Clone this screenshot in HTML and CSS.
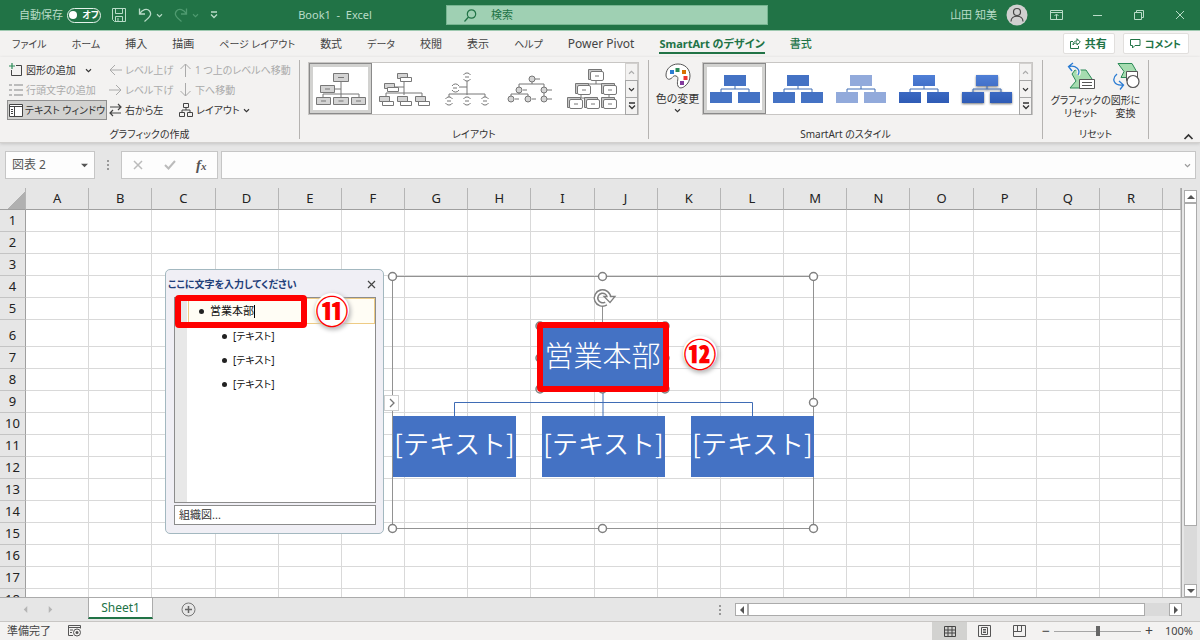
FILE: index.html
```
<!DOCTYPE html>
<html lang="ja">
<head>
    <meta charset="UTF-8">
    <meta name="viewport" content="width=device-width, initial-scale=1.0">
    <title>Book1 - Excel</title>
    <link rel="stylesheet" href="styles.css">
</head>
<body>
<!-- shared drawings -->
<svg class="defs" width="0" height="0" aria-hidden="true">
    <defs>
        <symbol id="caret" viewBox="0 0 8 6"><path d="M1 1.500l3 3 3-3" fill="none" stroke="currentColor" stroke-width="1.300"/></symbol>
        <symbol id="caretUp" viewBox="0 0 8 6"><path d="M1 4.500l3-3 3 3" fill="none" stroke="currentColor" stroke-width="1.300"/></symbol>
        <symbol id="more" viewBox="0 0 8 8"><path d="M1 1h6M1 3.500l3 3 3-3" fill="none" stroke="currentColor" stroke-width="1.300"/></symbol>
        <symbol id="tri" viewBox="0 0 8 8"><path d="M0 2h8L4 6z" fill="currentColor"/></symbol>
        <linearGradient id="blueFill" x1="0" y1="0" x2="0" y2="1">
            <stop offset="0" stop-color="#4f7fd6"/><stop offset="1" stop-color="#2f5bb5"/>
        </linearGradient>
        <symbol id="styleThumb" viewBox="0 0 54 34">
            <path d="M27 13v4M13 20v-3h28v3" fill="none" stroke="#3f6cb5" stroke-width="1"/>
            <path d="M16 3h22v11H16zM2 20h22v11H2zM30 20h22v11H30z"/>
        </symbol>
    </defs>
</svg>

<header class="titlebar">
    <div class="quick">
        <span class="autosave">自動保存</span>
        <button class="toggle" aria-label="自動保存"><i></i>オフ</button>
        <button class="ic-btn save" aria-label="保存"><svg width="14" height="14" viewBox="0 0 14 14"><path d="M.5.500h13v13H2.500l-2-2zM3.500.500v5h7v-5M3.500 13V8.500h7V13M6 10v3" fill="none" stroke="currentColor"/></svg></button>
        <button class="ic-btn undo" aria-label="元に戻す"><svg width="14" height="14" viewBox="0 0 14 14"><path d="M1.500.500v5.500H7M1.500 6C4 1.500 9 0 11.500 3s1 5.500-5 10.500" fill="none" stroke="currentColor" stroke-width="1.300"/></svg></button>
        <svg class="mini" width="7" height="5"><use href="#caret"/></svg>
        <button class="ic-btn redo" aria-label="やり直し"><svg width="14" height="14" viewBox="0 0 14 14"><path d="M12.500.500v5.500H7M12.500 6C10 1.500 5 0 2.500 3s-1 5.500 5 10.500" fill="none" stroke="currentColor" stroke-width="1.300"/></svg></button>
        <svg class="mini dim" width="7" height="5"><use href="#caret"/></svg>
        <button class="ic-btn custom" aria-label="カスタマイズ"><svg width="8" height="8"><use href="#more"/></svg></button>
    </div>
    <div class="doc">Book1&nbsp; -&nbsp; Excel</div>
    <label class="search">
        <svg width="13" height="13" viewBox="0 0 13 13"><circle cx="7.500" cy="5" r="4.200" fill="none" stroke="currentColor" stroke-width="1.200"/><path d="M4.500 8L.5 12.500" stroke="currentColor" stroke-width="1.200"/></svg>
        <input type="text" placeholder="検索" aria-label="検索">
    </label>
    <div class="account">
        <span>山田 知美</span>
        <svg class="avatar" width="22" height="22" viewBox="0 0 22 22"><circle cx="11" cy="11" r="10.500" fill="#d0d0d0"/><circle cx="11" cy="8" r="3.500" fill="none" stroke="#444" stroke-width="1.200"/><path d="M5 17.500c0-7 12-7 12 0" fill="none" stroke="#444" stroke-width="1.200"/></svg>
        <button class="win" aria-label="リボンの表示"><svg width="13" height="11" viewBox="0 0 13 11"><path d="M.5.500h12v9H.500zM.5 2.500h12M6.500 9V4.500M4.500 6l2-2 2 2" fill="none" stroke="currentColor"/></svg></button>
        <button class="win" aria-label="最小化"><svg width="9" height="9"><path d="M0 4.500h9" stroke="currentColor"/></svg></button>
        <button class="win" aria-label="元のサイズ"><svg width="10" height="10"><path d="M.5 2.500h7v7h-7zM2.500 2.500v-2h7v7h-2" fill="none" stroke="currentColor"/></svg></button>
        <button class="win" aria-label="閉じる"><svg width="10" height="10"><path d="M1 1l8 8M9 1l-8 8" stroke="currentColor"/></svg></button>
    </div>
</header>

<nav class="tabs">
    <a href="#" class="kana">ファイル</a>
    <a href="#" class="kana">ホーム</a>
    <a href="#">挿入</a>
    <a href="#">描画</a>
    <a href="#" class="kana">ページ レイアウト</a>
    <a href="#">数式</a>
    <a href="#" class="kana">データ</a>
    <a href="#">校閲</a>
    <a href="#">表示</a>
    <a href="#" class="kana">ヘルプ</a>
    <a href="#" class="latin">Power Pivot</a>
    <a href="#" class="active">SmartArt のデザイン</a>
    <a href="#" class="context">書式</a>
    <div class="share">
        <button><svg width="11" height="11" viewBox="0 0 11 11"><path d="M3 3.500H.500v7h8V8M3 7c0-3 2-4 4-4V.700L10.300 4 7 7V5C5 5 4 5.500 3 7z" fill="none" stroke="currentColor"/></svg>共有</button>
        <button class="kana"><svg width="11" height="11" viewBox="0 0 11 11"><path d="M.5 1.500h9.500v6H5l-2.500 2.500V7.500h-2z" fill="none" stroke="currentColor"/></svg>コメント</button>
    </div>
</nav>

<section class="ribbon">
    <div class="group create">
        <div class="commands">
            <button><svg width="14" height="14" viewBox="0 0 14 14"><path d="M7 2.500h5.500v10H2.500V7" fill="none" stroke="#444"/><path d="M3 0v6M0 3h6" stroke="#2b8a57" stroke-width="1.200"/></svg>図形の追加<svg class="drop" width="7" height="5"><use href="#caret"/></svg></button>
            <button disabled><svg width="13" height="12" viewBox="0 0 13 12"><path d="M13 6H1M6 1L1 6l5 5" fill="none" stroke="currentColor"/></svg>レベル上げ</button>
            <button disabled><svg width="13" height="14" viewBox="0 0 13 14"><path d="M6.500 14V1M1.500 6l5-5 5 5" fill="none" stroke="currentColor"/></svg>1 つ上のレベルへ移動</button>
            <button disabled><svg width="14" height="14" viewBox="0 0 14 14"><path d="M0 2h3M0 7h3M0 12h3M5 2h9M5 7h9M5 12h9" stroke="currentColor" stroke-width="1.400"/></svg>行頭文字の追加</button>
            <button disabled><svg width="13" height="12" viewBox="0 0 13 12"><path d="M0 6h12M7 1l5 5-5 5" fill="none" stroke="currentColor"/></svg>レベル下げ</button>
            <button disabled><svg width="13" height="14" viewBox="0 0 13 14"><path d="M6.500 0v13M1.500 8l5 5 5-5" fill="none" stroke="currentColor"/></svg>下へ移動</button>
            <button class="pressed"><svg width="14" height="13" viewBox="0 0 14 13"><path d="M.5.500h13v12H.500zM.5 2.500h13M5.500 2.500v10" fill="#fff" stroke="#444"/><path d="M2 5.500h2M2 7.500h2M2 9.500h2" stroke="#444"/></svg>テキスト ウィンドウ</button>
            <button><svg width="13" height="14" viewBox="0 0 13 14"><path d="M1 4h11M9 1l3 3-3 3M12 10H1M4 7l-3 3 3 3" fill="none" stroke="#444" stroke-width="1.200"/></svg>右から左</button>
            <button><svg width="14" height="14" viewBox="0 0 14 14"><path d="M4.500.500h5v4h-5zM.5 9.500h5v4h-5zM8.500 9.500h5v4h-5zM7 5v2M3 9.500V7h8v2.500" fill="none" stroke="#444"/></svg>レイアウト<svg class="drop near" width="7" height="5"><use href="#caret"/></svg></button>
        </div>
        <h2>グラフィックの作成</h2>
    </div>

    <div class="group layouts">
        <div class="gallery">
            <button class="thumb on" aria-label="組織図"><svg width="52" height="36" viewBox="0 0 52 36">
                <g fill="#d4d4d4" stroke="#777"><path d="M26 10v16M8 26v-3h36v3M19 18h7" fill="none"/><path d="M18.500 2.500h15v8h-15zM5.500 14.500h14v7h-14zM1.500 26.500h14v7h-14zM18.500 26.500h15v7h-15zM36.500 26.500h14v7h-14z"/><path d="M23 6.500h6M10 18h5M6 30h5M23.500 30h5M41 30h5"/></g></svg></button>
            <button class="thumb" aria-label="名前と役職名の組織図"><svg width="52" height="36" viewBox="0 0 52 36">
                <g stroke="#777"><path d="M26 8v16M8 25v-3h36v3M16 16h10" fill="none"/>
                <g fill="#d4d4d4"><path d="M19.500 2.500h10v5h-10zM6.500 12.500h10v5h-10zM1.500 25.500h10v5h-10zM19.500 25.500h10v5h-10zM37.500 25.500h10v5h-10z"/></g>
                <g fill="#fff"><path d="M22.500 6.500h11v4h-11zM9.500 16.500h11v4h-11zM4.500 30.500h11v4h-11zM22.500 30.500h11v4h-11zM40.500 30.500h11v4h-11z"/></g></g></svg></button>
            <button class="thumb" aria-label="半円の組織図"><svg width="52" height="36" viewBox="0 0 52 36">
                <g fill="none" stroke="#777"><path d="M26 10v14M8 26v-3h36v3M18 16h8M24 6h4M12 17h4M6 30h4M24 30h4M42 30h4"/>
                <path d="M22.500 4a4 4 0 0 1 7 0M22.500 8a4 4 0 0 0 7 0M11 15a4 4 0 0 1 7 0M11 19a4 4 0 0 0 7 0M4.500 28a4 4 0 0 1 7 0M4.500 32a4 4 0 0 0 7 0M22.500 28a4 4 0 0 1 7 0M22.500 32a4 4 0 0 0 7 0M40.500 28a4 4 0 0 1 7 0M40.500 32a4 4 0 0 0 7 0"/></g></svg></button>
            <button class="thumb" aria-label="円画像の階層"><svg width="52" height="36" viewBox="0 0 52 36">
                <g fill="#d4d4d4" stroke="#777"><path d="M28 8v5M15 17v-4h25v4M15 19v4M7 27v-4h17v4M40 19v6M31 8h5M19 19h4M43 19h5M11 28h4M28 28h4M43 28h5" fill="none"/>
                <circle cx="28" cy="8" r="3"/><circle cx="15" cy="19" r="3"/><circle cx="40" cy="19" r="3"/><circle cx="7" cy="28" r="3"/><circle cx="24" cy="28" r="3"/><circle cx="40" cy="28" r="3"/></g></svg></button>
            <button class="thumb" aria-label="階層"><svg width="52" height="42" viewBox="0 0 52 42">
                <g stroke="#777"><path d="M29 12v4M14 19v-3h26v3M14 26v4M7 33v-3h18v3M42 26v6" fill="none"/>
                <g fill="#c8c8c8"><path d="M21.500 1.500h13v10h-13zM8.500 15.500h13v10h-13zM34.500 15.500h13v10h-13zM.5 29.500h13v10H.500zM17.500 29.500h13v10h-13zM34.500 29.500h13v10h-13z"/></g>
                <g fill="#fff"><rect x="23.500" y="3.500" width="13" height="9" rx="1.500"/><rect x="10.500" y="17.500" width="13" height="9" rx="1.500"/><rect x="36.500" y="17.500" width="13" height="9" rx="1.500"/><rect x="2.500" y="31.500" width="13" height="9" rx="1.500"/><rect x="19.500" y="31.500" width="13" height="9" rx="1.500"/><rect x="36.500" y="31.500" width="13" height="9" rx="1.500"/></g>
                <path d="M28 8h4M15 22h4M41 22h4M7 36h4M24 36h4M41 36h4"/></g></svg></button>
            <div class="pager">
                <button disabled aria-label="上へ"><svg width="7" height="5"><use href="#caretUp"/></svg></button>
                <button aria-label="下へ"><svg width="7" height="5"><use href="#caret"/></svg></button>
                <button aria-label="その他"><svg width="8" height="8"><use href="#more"/></svg></button>
            </div>
        </div>
        <h2>レイアウト</h2>
    </div>

    <div class="group styles">
        <div class="body">
            <button class="tall colors">
                <svg width="26" height="26" viewBox="0 0 26 26"><path d="M13 1C6 1 1 6 1 12c0 3 2 5 4 4 3-1 3-4 6-3 4 1 0 6 2 10 1 3 5 2 7 0 3-2 5-6 5-10C25 6 20 1 13 1z" fill="#fff" stroke="#555"/><path d="M5 7h4v4H5z" fill="#2b7cd3"/><path d="M10.500 5h4v4h-4z" fill="#2b8a57"/><path d="M17 7h4v4h-4z" fill="#d87000"/><path d="M18.500 13h4v4h-4z" fill="#e33"/><path d="M15 18h4v4h-4z" fill="#833c9e"/></svg>
                <span>色の変更</span><svg width="7" height="5"><use href="#caret"/></svg>
            </button>
            <div class="gallery">
                <button class="thumb on" aria-label="シンプル"><svg class="flat" width="54" height="34"><use href="#styleThumb"/></svg></button>
                <button class="thumb" aria-label="白枠"><svg class="flat" width="54" height="34"><use href="#styleThumb"/></svg></button>
                <button class="thumb" aria-label="パステル"><svg class="pale" width="54" height="34"><use href="#styleThumb"/></svg></button>
                <button class="thumb" aria-label="グラデーション"><svg class="grad" width="54" height="34"><use href="#styleThumb"/></svg></button>
                <button class="thumb" aria-label="立体"><svg class="grad deep" width="54" height="34"><use href="#styleThumb"/></svg></button>
                <div class="pager">
                    <button disabled aria-label="上へ"><svg width="7" height="5"><use href="#caretUp"/></svg></button>
                    <button aria-label="下へ"><svg width="7" height="5"><use href="#caret"/></svg></button>
                    <button aria-label="その他"><svg width="8" height="8"><use href="#more"/></svg></button>
                </div>
            </div>
        </div>
        <h2>SmartArt のスタイル</h2>
    </div>

    <div class="group reset">
        <div class="body">
            <button class="tall kana">
                <svg width="28" height="28" viewBox="0 0 28 28"><path d="M8 8h11l6 9-6 9H3l6-7-4-7z" fill="#a6dcb0" stroke="#2b8a57"/><path d="M12.500 17.500h15v9h-15z" fill="#fff" stroke="#555"/><path d="M15 20.500h10M15 23.500h10" stroke="#555"/><path d="M11 13c3-5-2-10-9-8.500M6 1L1.500 4.500 5 9" fill="none" stroke="#f3f2f1" stroke-width="4"/><path d="M11 13c3-5-2-10-9-8.500M6 1L1.500 4.500 5 9" fill="none" stroke="#2b7cd3" stroke-width="1.300"/></svg>
                <span>グラフィックの<br>リセット</span>
            </button>
            <button class="tall kana">
                <svg width="28" height="28" viewBox="0 0 28 28"><path d="M6 1.500h14l4 7-3 7H9l3-6z" fill="#a6dcb0" stroke="#2b8a57"/><path d="M14.500 9.500h11v9h-11z" fill="#fff" stroke="#555"/><circle cx="21" cy="19.500" r="6" fill="#fff" stroke="#555" stroke-width="1.200"/><path d="M5 12c-6 5-3 12 6 11M7 19l4.500 4L8 27.500" fill="none" stroke="#2b7cd3" stroke-width="1.300"/></svg>
                <span>図形に<br>変換</span>
            </button>
        </div>
        <h2>リセット</h2>
    </div>
    <button class="collapse" aria-label="リボンを折りたたむ"><svg width="11" height="8"><use href="#caretUp"/></svg></button>
</section>

<section class="formula">
    <div class="namebox">
        <input type="text" value="図表 2" aria-label="名前ボックス">
        <button aria-label="名前の一覧"><svg width="7" height="7"><use href="#tri"/></svg></button>
    </div>
    <span class="dots"></span>
    <div class="fx">
        <button disabled aria-label="キャンセル"><svg width="10" height="10"><path d="M1 1l8 8M9 1l-8 8" stroke="currentColor" stroke-width="1.500"/></svg></button>
        <button disabled aria-label="入力"><svg width="12" height="10"><path d="M1 5l3.500 3.500L11 1" fill="none" stroke="currentColor" stroke-width="2"/></svg></button>
        <button aria-label="関数の挿入"><em>f<small>x</small></em></button>
    </div>
    <div class="entry">
        <input type="text" aria-label="数式バー">
        <svg width="7" height="5"><use href="#caret"/></svg>
    </div>
</section>

<main class="work">
    <div class="sheet">
        <table>
            <colgroup id="cols"><col class="rowhead"></colgroup>
            <thead><tr id="head"><th class="corner"></th></tr></thead>
            <tbody id="rows"></tbody>
        </table>

        <div class="canvas">
            <svg class="wires" width="440" height="270" viewBox="0 0 440 270">
                <g fill="none" stroke="#3f6cb5"><path d="M219 120v29M70.500 149v-13.500h298V149"/></g>
                <path d="M8.500 9.500h421v252H8.500zM218.500 36v24" fill="none" stroke="#929292"/>
                <g fill="#fff" stroke="#808080" stroke-width="1.500">
                    <circle cx="8.500" cy="9.500" r="4"/><circle cx="218.500" cy="9.500" r="4"/><circle cx="429.500" cy="9.500" r="4"/>
                    <circle cx="429.500" cy="135.500" r="4"/>
                    <circle cx="8.500" cy="261.500" r="4"/><circle cx="218.500" cy="261.500" r="4"/><circle cx="429.500" cy="261.500" r="4"/>
                    <circle cx="156" cy="59" r="4"/><circle cx="281" cy="59" r="4"/><circle cx="156" cy="122" r="4"/><circle cx="281" cy="122" r="4"/><circle cx="218.500" cy="122" r="4"/><circle cx="156" cy="91" r="4"/><circle cx="281" cy="91" r="4"/>
                </g>
                <path d="M225 30a6.500 6.500 0 1 0-3 6.500" fill="none" stroke="#808080" stroke-width="5"/>
                <path d="M220 29.500h11l-5 6z" fill="#fff" stroke="#808080" stroke-width="1.300"/>
                <path d="M225 31a6.500 6.500 0 1 0-3 5.500" fill="none" stroke="#fff" stroke-width="2"/>
            </svg>
            <div class="node root">営業本部</div>
            <div class="node first">[テキスト]</div>
            <div class="node second">[テキスト]</div>
            <div class="node third">[テキスト]</div>
            <button class="expand" aria-label="テキスト ウィンドウ"><svg width="6" height="10"><path d="M1 1l4 4-4 4" fill="none" stroke="#777" stroke-width="1.300"/></svg></button>

            <section class="pane">
                <header>
                    <h3>ここに文字を入力してください</h3>
                    <button aria-label="閉じる"><svg width="9" height="9"><path d="M1 1l7 7M8 1l-7 7" stroke="#444" stroke-width="1.200"/></svg></button>
                </header>
                <ul>
                    <li class="current">営業本部<i></i></li>
                    <li>[テキスト]</li>
                    <li>[テキスト]</li>
                    <li>[テキスト]</li>
                </ul>
                <footer>組織図...</footer>
            </section>

            <div class="mark mark-text"></div>
            <div class="mark mark-root"></div>
            <div class="step step-text">⑪</div>
            <div class="step step-root">⑫</div>
        </div>
    </div>
    <div class="vscroll">
        <button aria-label="上へ"><svg class="flip" width="8" height="8"><use href="#tri"/></svg></button>
        <div class="vthumb"></div>
        <div class="vtrack"></div>
        <button aria-label="下へ"><svg width="8" height="8"><use href="#tri"/></svg></button>
    </div>
</main>

<div class="sheetbar">
    <div class="sheetnav">
        <button disabled aria-label="前のシート"><svg class="left" width="7" height="7"><use href="#tri"/></svg></button>
        <button disabled aria-label="次のシート"><svg class="right" width="7" height="7"><use href="#tri"/></svg></button>
    </div>
    <button class="sheettab">Sheet1</button>
    <button class="addsheet" aria-label="新しいシート"><svg width="15" height="15"><circle cx="7.500" cy="7.500" r="6.500" fill="none" stroke="#777"/><path d="M7.500 4v7M4 7.500h7" stroke="#666" stroke-width="1.500"/></svg></button>
    <span class="dots"></span>
    <div class="hscroll">
        <button aria-label="左へ"><svg class="left" width="8" height="8"><use href="#tri"/></svg></button>
        <div class="hthumb"></div>
        <div class="htrack"></div>
        <button aria-label="右へ"><svg class="right" width="8" height="8"><use href="#tri"/></svg></button>
    </div>
</div>

<footer class="status">
    <span>準備完了</span>
    <svg class="macro" width="14" height="12" viewBox="0 0 14 12"><path d="M5 10.500H.500v-10h12v3M.5 2.500h12M2 5h3M2 7.500h2" fill="none" stroke="#555"/><circle cx="9" cy="7.500" r="3.500" fill="#f3f2f1" stroke="#555"/><circle cx="9" cy="7.500" r="1.500" fill="#555"/></svg>
    <div class="views">
        <button class="on" aria-label="標準"><svg width="12" height="11" viewBox="0 0 12 11"><path d="M.5.500h11v10H.500zM4 .500v10M8 .500v10M.5 4h11M.5 7h11" fill="none" stroke="#444"/></svg></button>
        <button aria-label="ページ レイアウト"><svg width="13" height="12" viewBox="0 0 13 12"><path d="M.5.500h12v11H.500zM3.500 2.500h6v7h-6zM5 4.500h3M5 6h3M5 7.500h3" fill="none" stroke="#555"/></svg></button>
        <button aria-label="改ページ プレビュー"><svg width="13" height="12" viewBox="0 0 13 12"><path d="M.5.500h12v11H.500zM.5 6.500h8v-6M4.500.500v6" fill="none" stroke="#555"/></svg></button>
    </div>
    <button class="zoom-step" aria-label="縮小">−</button>
    <input type="range" min="0" max="200" value="100" aria-label="ズーム">
    <button class="zoom-step" aria-label="拡大">+</button>
    <span class="percent">100%</span>
</footer>

<script>
    const letters = 'ABCDEFGHIJKLMNOPQR'.split('');
    const cols = document.getElementById('cols');
    const head = document.getElementById('head');
    const rows = document.getElementById('rows');

    letters.concat('').forEach(letter => {
        const col = document.createElement('col');
        col.className = letter ? 'full' : 'rest';
        cols.appendChild(col);
        const th = document.createElement('th');
        th.textContent = letter;
        head.appendChild(th);
    });

    for (let i = 1; i <= 18; i++) {
        const tr = document.createElement('tr');
        // row 6 is taller than the others
        if (i === 6) tr.className = 'high';
        tr.innerHTML = '<th>' + i + '</th>' + '<td></td>'.repeat(letters.length + 1);
        rows.appendChild(tr);
    }
</script>
</body>
</html>
```
FILE: styles.css
```
* {
    box-sizing: border-box;
}

body {
    margin: 0;
    height: 100vh;
    display: flex;
    flex-direction: column;
    overflow: hidden;
    font-family: "Noto Sans", "Noto Sans CJK JP", sans-serif;
    font-size: 11px;
    line-height: 16px;
    font-feature-settings: "palt";
    color: #333;
    background: #e6e6e6;
}

button, input {
    font: inherit;
    font-feature-settings: inherit;
    color: inherit;
    margin: 0;
    padding: 0;
    border: 0;
    background: none;
}

button {
    display: flex;
    align-items: center;
    justify-content: center;
    white-space: nowrap;
}

svg {
    display: block;
    flex: none;
}

.defs {
    position: absolute;
}

/* title bar */
.titlebar {
    flex: none;
    height: 31px;
    display: grid;
    grid-template-columns: 224px 222px 322px 1fr;
    align-items: center;
    background: #217346;
    border-bottom: 1px solid #9ec9b0;
    color: #b9dcc8;
}

.quick {
    display: flex;
    align-items: center;
    padding-left: 19px;
}

.autosave {
    width: 48px;
    white-space: nowrap;
}

.toggle {
    width: 34px;
    height: 15px;
    gap: 5px;
    margin-right: 11px;
    border: 1px solid #e4f2ea;
    border-radius: 8px;
    font-size: 9px;
    font-weight: bold;
    color: #fff;
}

.toggle i {
    width: 8px;
    height: 8px;
    border-radius: 50%;
    background: #fff;
}

.save {
    margin-right: 12px;
}

.mini {
    margin: 0 11px 0 4px;
}

.redo, .dim {
    color: #4f9a70;
}

.doc {
    text-align: center;
}

.search {
    display: flex;
    align-items: center;
    gap: 14px;
    height: 20px;
    padding-left: 17px;
    background: #9fd0b3;
    border: 1px solid #77b591;
    color: #217346;
}

.search input {
    flex: 1;
    min-width: 0;
}

.search input::placeholder {
    color: #217346;
}

.account {
    display: flex;
    align-items: center;
    justify-content: flex-end;
}

.avatar {
    margin: 0 8px 0 9px;
}

.win {
    width: 41px;
    height: 30px;
}

/* tabs */
.tabs {
    flex: none;
    height: 26px;
    display: flex;
    align-items: flex-start;
    gap: 25px;
    padding: 5px 11px 0 12px;
    background: #f3f2f1;
}

.tabs a {
    color: #444;
    text-decoration: none;
    white-space: nowrap;
    border-bottom: 2px solid transparent;
}

.tabs .kana, .tall.kana {
    font-size: 10px;
}

.tabs .latin {
    font-size: 12px;
}

.tabs .active {
    color: #217346;
    font-weight: bold;
    border-color: #217346;
}

.tabs .context {
    color: #217346;
    font-weight: 500;
}

.share {
    display: flex;
    gap: 8px;
    margin: -3px 0 0 auto;
}

.share button {
    height: 21px;
    gap: 4px;
    padding: 0 7px 0 6px;
    background: #fff;
    border: 1px solid #e1dfdd;
    border-radius: 2px;
    color: #217346;
    font-weight: bold;
}

/* ribbon */
.ribbon {
    flex: none;
    height: 86px;
    display: flex;
    position: relative;
    padding-top: 3px;
    background: #f3f2f1;
    border-bottom: 1px solid #d2d0ce;
    box-shadow: 0 1px 3px #c4c4c4;
}

.group {
    height: 79px;
    display: flex;
    flex-direction: column;
    justify-content: space-between;
    border-right: 1px solid #b5b3b1;
}

.group h2 {
    margin: 0;
    font-size: 10px;
    font-weight: normal;
    line-height: 10px;
    text-align: center;
}

.create {
    width: 300px;
}

.commands {
    display: grid;
    grid-template-columns: 100px 70px auto;
    grid-auto-rows: 20px;
    padding-left: 7px;
    font-size: 10px;
}

.commands button {
    justify-content: flex-start;
    gap: 3px;
    padding-left: 2px;
}

.commands button:disabled {
    color: #aaa;
}

.commands .pressed {
    gap: 2px;
    padding-left: 1px;
    border: 1px solid #8f8f8f;
    background: #d2d2d0;
}

.drop {
    margin-left: 6px;
}

.near {
    margin-left: 0;
}

.layouts {
    width: 349px;
    padding-left: 8px;
}

.layouts h2 {
    padding-right: 8px;
}

.styles {
    width: 394px;
}

.body {
    display: flex;
}

.gallery {
    display: flex;
    flex: none;
    height: 53px;
    width: 331px;
    margin-top: 2px;
    background: #fff;
    border: 1px solid #c8c6c4;
}

.thumb {
    flex: 1;
    min-width: 0;
    border: 1px solid transparent;
}

.thumb.on {
    border-color: #8a8a8a;
    box-shadow: inset 0 0 0 3px #d2d2d0;
}

.pager {
    flex: none;
    width: 13px;
    display: grid;
    grid-template-rows: repeat(3, 1fr);
    background: #f3f2f1;
}

.pager button {
    border: 1px solid #a6a6a6;
    margin-bottom: -1px;
}

.pager button:disabled {
    color: #aaa;
    border-color: #d2d0ce;
}

.flat {
    fill: #4472c4;
}

.pale {
    fill: #92aadb;
}

.grad {
    fill: url(#blueFill);
}

.deep {
    filter: drop-shadow(0 1px 1px #777);
}

.tall {
    flex-direction: column;
    justify-content: flex-start;
    line-height: 13px;
}

.tall.kana {
    padding-top: 2px;
}

.tall span {
    margin-top: 4px;
}

.colors {
    width: 53px;
    padding: 3px 0 0 4px;
    gap: 3px;
}

.colors span {
    margin-top: 0;
}

.reset {
    width: 106px;
}

.reset .body {
    justify-content: center;
}

.collapse {
    margin: auto 6px 1px auto;
}

/* formula bar */
.formula {
    flex: none;
    height: 45px;
    display: flex;
    padding: 8px 4px 9px 5px;
    color: #555;
}

.namebox, .fx, .entry {
    display: flex;
    align-items: center;
    background: #fdfdfd;
    border: 1px solid #c6c6c6;
}

.namebox {
    width: 90px;
    padding: 0 6px;
    font-size: 12px;
}

.namebox input, .entry input {
    flex: 1;
    min-width: 0;
}

.dots {
    width: 2px;
    height: 10px;
    align-self: center;
    background: repeating-linear-gradient(#999 0 2px, transparent 2px 4px);
}

.formula .dots {
    margin: 0 12px;
}

.fx {
    width: 97px;
    margin-right: 3px;
}

.fx button {
    flex: 1;
}

.fx button:disabled {
    color: #bbb;
}

.fx em {
    font-family: "Liberation Serif", serif;
    font-size: 15px;
    font-weight: bold;
}

.fx small {
    font-size: 11px;
}

.entry {
    flex: 1;
    padding-right: 4px;
    color: #999;
}

/* sheet */
.work {
    flex: 1;
    min-height: 0;
    display: flex;
}

.sheet {
    flex: 1;
    position: relative;
    overflow: hidden;
    background: #fff;
    border-right: 1px solid #a6a6a6;
}

table {
    width: 100%;
    table-layout: fixed;
    border-collapse: separate;
    border-spacing: 0;
}

.rowhead {
    width: 26px;
}

.full {
    width: 5.35%;
}

th, td {
    height: 22px;
    padding: 0;
    border-right: 1px solid #d9d9d9;
    border-bottom: 1px solid #d9d9d9;
}

th {
    padding-bottom: 1px;
    font-size: 13px;
    font-weight: normal;
    line-height: 20px;
    vertical-align: bottom;
    background: #e6e6e6;
    color: #222;
}

thead th {
    border-right-color: #b5b5b5;
    border-bottom-color: #9f9f9f;
}

tbody th {
    border-right-color: #9f9f9f;
    border-bottom-color: #c4c4c4;
}

.corner {
    background: linear-gradient(135deg, #e6e6e6 62%, #b0b0b0 62%);
}

.high th, .high td {
    height: 27px;
}

.canvas {
    position: absolute;
    top: 0;
    left: 0;
}

.wires {
    position: absolute;
    left: 384px;
    top: 79px;
}

.node {
    position: absolute;
    top: 228px;
    width: 123px;
    height: 61px;
    background: #4472c4;
    color: #fff;
    font-family: "Noto Sans CJK JP", sans-serif;
    font-feature-settings: normal;
    font-size: 26px;
    font-weight: 350;
    line-height: 54px;
    text-align: center;
    white-space: nowrap;
}

.root {
    left: 541px;
    top: 138px;
    height: 62px;
    font-size: 29px;
    font-weight: 300;
    line-height: 56px;
}

.first {
    left: 393px;
}

.second {
    left: 542px;
}

.third {
    left: 691px;
}

.expand {
    position: absolute;
    left: 384px;
    top: 207px;
    width: 15px;
    height: 16px;
    background: #fff;
    border: 1px solid #d0d0d0;
}

.pane {
    position: absolute;
    left: 165px;
    top: 81px;
    width: 219px;
    height: 265px;
    display: flex;
    flex-direction: column;
    padding: 1px 7px 8px 8px;
    background: #f0eff5;
    border: 1px solid #a3b8c0;
    border-radius: 5px;
}

.pane header {
    display: flex;
    align-items: center;
    justify-content: space-between;
    height: 26px;
    margin-left: -6px;
}

.pane h3 {
    margin: 0;
    font-size: 10px;
    color: #1f3e79;
}

.pane ul {
    flex: 1;
    margin: 0 0 2px;
    padding: 0 0 0 13px;
    list-style: none;
    color: #111;
    border: 1px solid #8c8c8c;
    background: linear-gradient(90deg, #e8e8e8 12px, #fff 12px);
}

.pane li {
    display: flex;
    align-items: center;
    height: 24px;
    padding-left: 34px;
    font-size: 10px;
}

.pane li::before {
    content: "";
    width: 5px;
    height: 5px;
    margin-right: 6px;
    border-radius: 50%;
    background: #222;
}

.pane li.current {
    height: 26px;
    padding-left: 10px;
    font-size: 11px;
    background: #fffdf5;
    border: 1px solid #eecb84;
}

.current i {
    width: 1px;
    height: 13px;
    background: #000;
}

.pane footer {
    height: 20px;
    padding-left: 4px;
    line-height: 18px;
    background: #fff;
    border: 1px solid #8c8c8c;
}

.mark {
    position: absolute;
    border: 6px solid #f00;
    border-radius: 4px;
}

.mark-text {
    left: 175px;
    top: 107px;
    width: 132px;
    height: 33px;
}

.mark-root {
    left: 537px;
    top: 134px;
    width: 132px;
    height: 70px;
}

.step {
    position: absolute;
    display: flex;
    align-items: center;
    justify-content: center;
    width: 32px;
    height: 32px;
    background: #fff;
    border-radius: 50%;
    box-shadow: 0 0 0 1px #fff, 1px 2px 4px 2px #bbb;
    color: #f00;
    font-family: "Noto Sans CJK JP", sans-serif;
    font-size: 33px;
    font-weight: 900;
    line-height: 32px;
}

.step-text {
    left: 316px;
    top: 106px;
}

.step-root {
    left: 684px;
    top: 149px;
}

.vscroll {
    width: 18px;
    display: flex;
    flex-direction: column;
    padding: 2px 3px 0 2px;
}

.vscroll button, .hscroll button {
    flex: none;
    width: 13px;
    height: 13px;
    background: #fff;
    border: 1px solid #ababab;
    color: #555;
}

.vthumb {
    flex: 323;
    background: #fff;
    border: 1px solid #ababab;
}

.vtrack {
    flex: 58;
    background: #dadada;
}

.flip {
    transform: rotate(180deg);
}

.left {
    transform: rotate(90deg);
}

.right {
    transform: rotate(-90deg);
}

/* sheet tabs */
.sheetbar {
    flex: none;
    height: 24px;
    display: flex;
    align-items: center;
    padding-right: 18px;
    border-top: 1px solid #ababab;
}

.sheetnav {
    width: 88px;
    display: flex;
    gap: 18px;
    padding-left: 22px;
    color: #b5b5b5;
}

.sheettab {
    width: 65px;
    height: 21px;
    align-self: flex-start;
    background: #fff;
    border: 1px solid #ababab;
    border-width: 0 1px 2px;
    border-bottom-color: #217346;
    color: #217346;
    font-size: 12px;
}

.addsheet {
    margin: 0 auto 0 28px;
}

.hscroll {
    width: 447px;
    display: flex;
    margin-left: 14px;
}

.hthumb {
    flex: 397;
    background: #fff;
    border: 1px solid #ababab;
}

.htrack {
    flex: 24;
    background: #dadada;
}

/* status bar */
.status {
    flex: none;
    height: 19px;
    display: flex;
    align-items: center;
    padding: 0 7px;
    background: #f3f2f1;
    border-top: 1px solid #c8c6c4;
    color: #444;
}

.macro {
    margin-left: 17px;
}

.views {
    display: flex;
    align-self: stretch;
    margin: 0 4px 0 auto;
}

.views button {
    width: 35px;
}

.views .on {
    background: #d2d2d0;
}

.zoom-step {
    width: 10px;
    font-size: 14px;
}

input[type="range"] {
    appearance: none;
    width: 87px;
    height: 12px;
    margin: 0 3px;
    background: linear-gradient(#a6a6a6, #a6a6a6) center / 100% 1px no-repeat;
}

input[type="range"]::-webkit-slider-thumb {
    appearance: none;
    width: 4px;
    height: 10px;
    background: #666;
}

.percent {
    width: 39px;
    text-align: right;
}
```
